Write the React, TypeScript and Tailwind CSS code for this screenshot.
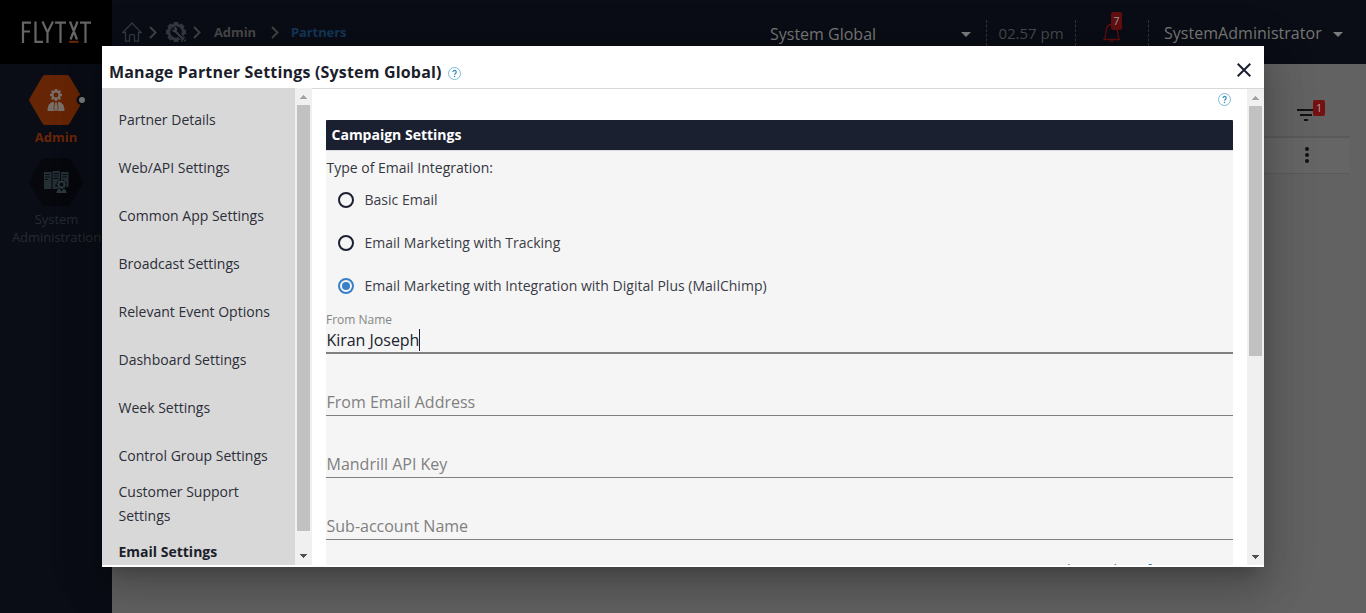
import React from "react";

const navItems = [
  "Partner Details",
  "Web/API Settings",
  "Common App Settings",
  "Broadcast Settings",
  "Relevant Event Options",
  "Dashboard Settings",
  "Week Settings",
  "Control Group Settings",
  "Customer Support Settings",
  "Email Settings",
];

const integrationTypes = [
  { label: "Basic Email", checked: false },
  { label: "Email Marketing with Tracking", checked: false },
  { label: "Email Marketing with Integration with Digital Plus (MailChimp)", checked: true },
];

const emptyFields = ["From Email Address", "Mandrill API Key", "Sub-account Name"];

function Chevron() {
  return (
    <svg width="8" height="13" viewBox="0 0 8 13" fill="none" stroke="#424243" strokeWidth="2">
      <path d="M1 1l5.5 5.5L1 12" />
    </svg>
  );
}

function Caret() {
  return (
    <svg width="10" height="5" viewBox="0 0 10 5" fill="#7c7c7c">
      <path d="M0 0h10L5 5z" />
    </svg>
  );
}

function Help() {
  return (
    <svg width="13" height="13" viewBox="0 0 13 13" fill="none">
      <circle cx="6.5" cy="6.5" r="6" stroke="#6fb2ce" strokeWidth=".9" />
      <path d="M4.9 5.1a1.65 1.65 0 1 1 2.5 1.4c-.6.4-.8.6-.8 1.3" stroke="#2f8fba" strokeWidth="1.2" />
      <path d="M5.9 8.8h1.3v1.3H5.9z" fill="#2f8fba" />
    </svg>
  );
}

function Logo() {
  return (
    <svg width="70" height="22" viewBox="0 0 70 22" fill="none" stroke="#666" strokeWidth="2.2">
      <path d="M2 22V1.600H10M2 10.500H9M14.500 .5v20.400H22M21.500 .5l5 11V22M32 .5l-5.500 11M34 1.600h11M39.500 1v21M49 .5l7 18M56.500 .5l-7 18M59 1.600h11M64.500 1v21" />
      <path d="M48 20.800h9.500" stroke="#6a2b0c" strokeWidth="2" />
    </svg>
  );
}

function HomeIcon() {
  return (
    <svg width="20" height="20" viewBox="0 0 20 20" fill="none" stroke="#333940" strokeWidth="1.300">
      <path d="M.8 10.500L10 1l9.200 9.500H16.500v8.700h-4v-5.500q0-1-1-1h-3q-1 0-1 1v5.500h-4v-8.700z" />
    </svg>
  );
}

const teeth = [0, 45, 90, 135, 180, 225, 270, 315];

function GearIcon() {
  return (
    <svg width="20" height="20" viewBox="0 0 20 20" fill="none">
      <circle cx="10" cy="10" r="7.200" stroke="#343940" strokeWidth="2.800" />
      {teeth.map((a) => (
        <rect key={a} x="7.500" y="0" width="5" height="3" rx=".8" fill="#343940" transform={`rotate(${a} 10 10)`} />
      ))}
      <path d="M13 13l6 6" stroke="#0a0d15" strokeWidth="4" />
      <path d="M9.500 9.500l8 8" stroke="#3c4147" strokeWidth="1.800" />
      <path d="M6 7.200a2.700 2.700 0 0 0 4.600 2.300A2.700 2.700 0 0 0 7.600 5.200l1.100 2.100-1 1z" fill="#3c4147" />
      <path d="M19 15.500l-2 .5-1 2 .5 2M19.800 17.500l-1.500 1.800" stroke="#3c4147" strokeWidth="1.200" />
    </svg>
  );
}

function BellIcon() {
  return (
    <svg width="21" height="20" viewBox="0 0 21 20" fill="none" stroke="#610e10" strokeWidth="1.300">
      <path d="M3 17.500h15.500c-2.300-3-1.600-7-2.500-11C15.200 3.600 13 2.500 10.700 2.500S6.200 3.600 5.500 6.500c-1 4-.3 8-2.500 11z" />
      <path d="M9 19.200h3" />
    </svg>
  );
}

function AdminHex() {
  return (
    <svg width="56" height="50" viewBox="0 0 56 50">
      <path d="M13.500 1.500Q14.500 0 16 0h22q1.500 0 2.500 1.500l13 22q.8 1.500 0 3l-13 22Q39.500 50 38 50H16q-1.500 0-2.500-1.500l-13-22q-.8-1.500 0-3z" fill="#662504" />
      <circle cx="52.500" cy="25" r="5" fill="#0a0d15" />
      <circle cx="53" cy="25" r="3" fill="#777" />
      <circle cx="27" cy="20" r="3.600" fill="none" stroke="#7a706a" strokeWidth="2.200" />
      {teeth.map((a) => (
        <rect key={a} x="25.800" y="14" width="2.400" height="2" fill="#7a706a" transform={`rotate(${a} 27 20)`} />
      ))}
      <path d="M18.500 36q0-6 3-8l3-1.500L27 34l2.500-7.500 3 1.500q3 2 3 8z" fill="#7a706a" />
      <path d="M25.900 27h2.200l1.200 7L27 36.200 24.700 34z" fill="#7a706a" stroke="#662504" strokeWidth=".7" />
    </svg>
  );
}

function SystemHex() {
  return (
    <svg width="54" height="48" viewBox="0 0 54 48">
      <path d="M13 1.500Q14 0 15.500 0h23Q40 0 41 1.500L53.500 22.500q.8 1.500 0 3L41 46.500Q40 48 38.500 48h-23Q14 48 13 46.500L.5 25.500q-.8-1.500 0-3z" fill="#07080d" />
      <path d="M15 14h7.500v17H15zM23.500 13h7.500v18h-7.500zM32 14h7.500v15H32z" fill="#243036" />
      <path d="M16 16.500h5M16 19h5M16 21.500h3M24.500 15.500h5.500M24.500 18h5.500M24.500 20.500h5.500M33.500 16.500h4.500M33.500 19h4.500" stroke="#090d12" strokeWidth="1" />
      <circle cx="32.500" cy="26.500" r="5" fill="#090d12" />
      <circle cx="32.500" cy="26.500" r="2.800" fill="none" stroke="#2b393f" strokeWidth="1.800" />
      {teeth.map((a) => (
        <rect key={a} x="31.700" y="22" width="1.600" height="1.600" fill="#2b393f" transform={`rotate(${a} 32.500 26.500)`} />
      ))}
      <path d="M27.500 35q0-3.500 3-4.500l2 3 2-3q3 1 3 4.500z" fill="#2b393f" />
      <circle cx="27" cy="27.500" r="1" fill="#090d12" />
    </svg>
  );
}

function ScrollArrow({ down = false }: { down?: boolean }) {
  return (
    <svg width="7" height="4" viewBox="0 0 7 4" shapeRendering="crispEdges" fill={down ? "#505050" : "#a3a3a3"}>
      <path d={down ? "M0 0h7v1H6v1H5v1H4v1H3V3H2V2H1V1H0z" : "M0 4h7V3H6V2H5V1H4V0H3v1H2v1H1v1H0z"} />
    </svg>
  );
}

function Backdrop() {
  return (
    <div className="flex h-full bg-[#626262]">
      <aside className="flex w-28 shrink-0 flex-col bg-[#0a0d15]">
        <div className="flex h-16 items-center justify-center bg-black">
          <Logo />
        </div>
        <div className="flex flex-col items-center pt-[11px]">
          <div className="pl-[2px]"><AdminHex /></div>
          <div className="mt-[3px] text-[13px] leading-[18px] font-bold text-[#6c2508]">Admin</div>
          <div className="mt-[12px]"><SystemHex /></div>
          <div className="mt-[4px] w-[100px] pl-px text-center text-[13px] leading-[18px] tracking-[-0.05px] text-[#262b32]">
            System Administration
          </div>
        </div>
      </aside>
      <div className="flex min-w-0 flex-1 flex-col">
        <header className="flex h-16 items-start bg-[#0a0d15]">
          <div className="flex h-16 w-[658px] shrink-0 items-center pl-[10px]">
            <HomeIcon />
            <div className="ml-[7px] w-[17px]"><Chevron /></div>
            <GearIcon />
            <div className="ml-[7px] w-[21px]"><Chevron /></div>
            <span className="w-[57px] pt-[2px] text-[13px] font-bold tracking-[-0.1px] text-[#474747]">Admin</span>
            <div className="w-[20px]"><Chevron /></div>
            <span className="pt-[2px] text-[13px] font-bold tracking-[-0.1px] text-[#153657]">Partners</span>
          </div>
          <div className="flex w-[217px] shrink-0 items-center justify-between pt-[22px] pr-[16px] text-[16px] leading-6 text-[#777]">
            <span>System Global</span>
            <div className="pt-px"><Caret /></div>
          </div>
          <div className="-ml-px mt-5 flex h-[26px] w-[90px] shrink-0 items-center justify-center border-x border-dashed border-[#303238] text-[15px] text-[#46484c]">
            02.57 pm
          </div>
          <div className="relative mt-5 h-[26px] w-[73px] shrink-0 border-r border-dashed border-[#303238]">
            <div className="pt-[2px] pl-[25px]"><BellIcon /></div>
            <span className="absolute -top-2 left-[35px] flex h-[18px] w-[11px] items-center justify-center rounded-[2px] bg-[#610e10] text-[11px] text-[#999]">7</span>
          </div>
          <div className="flex items-center gap-[11px] pt-[21px] pl-[15px] text-[16px] leading-6 text-[#777]">
            <span className="tracking-[0.03px]">SystemAdministrator</span>
            <div className="pt-[2px]"><Caret /></div>
          </div>
        </header>
        <main className="flex flex-col pr-4">
          <div className="flex h-[72px] justify-end pt-[44px] pr-[34px]">
            <div className="relative h-4 w-[19px]">
              <svg width="19" height="14" viewBox="0 0 19 14" stroke="#111" strokeWidth="2">
                <path d="M0 2h18M3 7h12M7 12h4" />
              </svg>
              <span className="absolute -top-2 left-4 flex h-4 w-3 items-center justify-center rounded-[2px] bg-[#751012] text-[10px] text-[#aaa]">1</span>
            </div>
          </div>
          <div className="flex h-[38px] items-center justify-end border-t-2 border-b border-t-[#595959] border-b-[#5a5a5a] bg-[#656565] pr-[41px] pb-[2px]">
            <svg width="4" height="16" viewBox="0 0 4 16" fill="#111">
              <circle cx="2" cy="2" r="2" /><circle cx="2" cy="8" r="2" /><circle cx="2" cy="14" r="2" />
            </svg>
          </div>
        </main>
      </div>
    </div>
  );
}

function SettingsForm() {
  return (
    <div className="h-[476px] flex-1 overflow-hidden bg-white pr-[14px] pl-[14px]">
      <div className="flex h-[31px] justify-end pt-1 pr-[2px]"><Help /></div>
      <div className="bg-[#f5f5f5]">
        <h2 className="flex h-[30px] items-center rounded-t-[1px] bg-[#1b2031] pb-[2px] pl-[5.5px] text-[14px] font-bold text-white">Campaign Settings</h2>
        <div className="h-[28px] border-t border-[#dcdce0] pt-[6px] pl-[0.5px] text-[14px] leading-[22px] text-[#33353f]">Type of Email Integration:</div>
        <div className="pl-3">
          {integrationTypes.map((t) => (
            <label key={t.label} className="flex h-[43px] items-center gap-[10.5px] text-[14px] tracking-[0.01px] text-[#3a3c47]">
              <span className={t.checked ? "flex size-4 items-center justify-center rounded-full border-2 border-[#3880c8]" : "size-4 rounded-full border-2 border-[#1b2031]"}>
                {t.checked && <span className="size-2 rounded-full bg-[#3880c8]" />}
              </span>
              {t.label}
            </label>
          ))}
        </div>
        <div className="h-[47px] border-b-2 border-[#808080] pt-[5px]">
          <div className="text-[12px] leading-4 text-[#858585]">From Name</div>
          <div className="flex h-6 items-center text-[16px] text-[#20222e]">
            <span className="pl-[0.5px] tracking-[-0.04px]">Kiran Joseph</span><span className="h-[22px] w-px bg-[#1b2031]" />
          </div>
        </div>
        {emptyFields.map((f) => (
          <div key={f} className="flex h-[62px] items-end border-b border-[#808080] pb-[1px] pl-[0.5px] text-[16px] leading-6 text-[#808080]">{f}</div>
        ))}
        <div className="flex h-12 justify-end pt-[20px] pr-[23px] text-[14px] leading-5 text-[#1d6fa8]">Advanced Configuration</div>
      </div>
    </div>
  );
}

function SettingsDialog() {
  return (
    <div className="absolute top-[46px] left-[102px] flex h-[521px] w-[1162px] flex-col bg-white shadow-[0_11px_15px_-7px_rgba(0,0,0,0.2),0_24px_38px_3px_rgba(0,0,0,0.14),0_9px_46px_8px_rgba(0,0,0,0.12)]">
      <div className="flex h-[42px] shrink-0 items-center justify-between pt-[10px] pr-[13px] pl-[7px]">
        <div className="flex items-center gap-[6px]">
          <h1 className="text-[16px] leading-6 font-bold tracking-[0.18px] text-[#1b1e2b]">Manage Partner Settings (System Global)</h1>
          <div className="pt-[3px]"><Help /></div>
        </div>
        <svg width="14" height="14" viewBox="0 0 14 14" stroke="#1b2031" strokeWidth="2" className="-mt-1">
          <path d="M.7.7l12.600 12.600M13.300.7L.7 13.300" />
        </svg>
      </div>
      <div className="flex h-[477px] overflow-hidden">
        <nav className="w-[193px] shrink-0 overflow-hidden bg-[#d8d8d8] px-4 pt-[8px]">
          {navItems.map((item) => (
            <div key={item} className={item === "Email Settings" ? "flex h-12 items-center pl-[0.5px] text-[14px] leading-6 font-bold text-[#1b1e2b]" : "flex h-12 items-center pl-[0.5px] text-[14px] leading-6 text-[#2c2e38]"}>{item}</div>
          ))}
        </nav>
        <div className="flex w-[17px] shrink-0 flex-col items-center bg-[#f0f0f0]">
          <div className="flex h-[17px] items-center"><ScrollArrow /></div>
          <div className="h-[426px] w-[13px] bg-[#c1c1c1]" />
          <div className="mt-auto flex h-[19px] items-center"><ScrollArrow down /></div>
        </div>
        <div className="flex flex-1 border-t border-[#d8d8d8]">
          <SettingsForm />
          <div className="flex w-[17px] shrink-0 flex-col items-center bg-[#f0f0f0]">
            <div className="flex h-[17px] items-center"><ScrollArrow /></div>
            <div className="h-[250px] w-[13px] bg-[#c1c1c1]" />
            <div className="mt-auto flex h-[17px] items-center"><ScrollArrow down /></div>
          </div>
        </div>
      </div>
    </div>
  );
}

export default function App() {
  return (
    <div className="relative h-[613px] w-[1366px] overflow-hidden font-['Open_Sans','Noto_Sans',sans-serif]">
      <Backdrop />
      <SettingsDialog />
    </div>
  );
}
